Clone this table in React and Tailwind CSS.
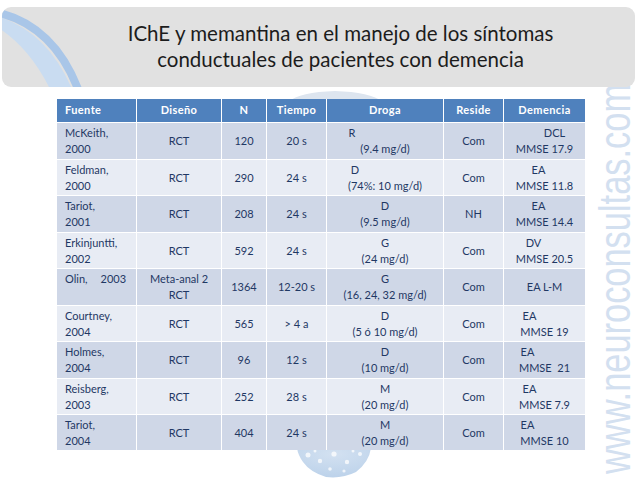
import React from "react";

const rows = [
  {
    f: ["McKeith,", "2000"],
    d: ["RCT"],
    n: "120",
    t: "20 s",
    dr: [["R", "pr-[66px]"], ["(9.4 mg/d)", ""]],
    r: "Com",
    de: [["DCL", "pl-[20px]"], ["MMSE 17.9", ""]],
  },
  {
    f: ["Feldman,", "2000"],
    d: ["RCT"],
    n: "290",
    t: "24 s",
    dr: [["D", "pr-[60px]"], ["(74%: 10 mg/d)", ""]],
    r: "Com",
    de: [["EA", "pr-[12px]"], ["MMSE 11.8", ""]],
  },
  {
    f: ["Tariot,", "2001"],
    d: ["RCT"],
    n: "208",
    t: "24 s",
    dr: [["D", ""], ["(9.5 mg/d)", ""]],
    r: "NH",
    de: [["EA", "pr-[12px]"], ["MMSE 14.4", ""]],
  },
  {
    f: ["Erkinjuntti,", "2002"],
    d: ["RCT"],
    n: "592",
    t: "24 s",
    dr: [["G", ""], ["(24 mg/d)", ""]],
    r: "Com",
    de: [["DV", "pr-[22px]"], ["MMSE 20.5", ""]],
  },
  {
    f: ["olin", "\u00a0"],
    d: ["Meta-anal 2", "RCT"],
    n: "1364",
    t: "12-20 s",
    dr: [["G", ""], ["(16, 24, 32 mg/d)", ""]],
    r: "Com",
    de: [["EA L-M", ""]],
  },
  {
    f: ["Courtney,", "2004"],
    d: ["RCT"],
    n: "565",
    t: "> 4 a",
    dr: [["D", ""], ["(5 ó 10 mg/d)", ""]],
    r: "Com",
    de: [["EA", "pr-[30px]"], ["MMSE 19", ""]],
  },
  {
    f: ["Holmes,", "2004"],
    d: ["RCT"],
    n: "96",
    t: "12 s",
    dr: [["D", ""], ["(10 mg/d)", ""]],
    r: "Com",
    de: [["EA", "pr-[34px]"], ["MMSE  21", ""]],
  },
  {
    f: ["Reisberg,", "2003"],
    d: ["RCT"],
    n: "252",
    t: "28 s",
    dr: [["M", ""], ["(20 mg/d)", ""]],
    r: "Com",
    de: [["EA", "pr-[30px]"], ["MMSE 7.9", ""]],
  },
  {
    f: ["Tariot,", "2004"],
    d: ["RCT"],
    n: "404",
    t: "24 s",
    dr: [["M", ""], ["(20 mg/d)", ""]],
    r: "Com",
    de: [["EA", "pr-[34px]"], ["MMSE 10", ""]],
  },
];

const headers = ["Fuente", "Diseño", "N", "Tiempo", "Droga", "Reside", "Demencia"];

function Cell({ bg, children, left }) {
  return (
    <div
      className={`${bg} flex flex-col justify-center leading-[16px] ${
        left ? "items-start pl-[8px]" : "items-stretch text-center"
      }`}
    >
      {children}
    </div>
  );
}

export default function App() {
  return (
    <div className="relative w-[638px] h-[479px] overflow-hidden bg-white font-['Lato','Open_Sans',sans-serif]">
      {/* globe watermark */}
      <svg
        className="absolute left-0 top-0"
        width="638"
        height="479"
        viewBox="0 0 638 479"
      >
        <defs>
          <radialGradient id="g1" cx="50%" cy="20%" r="80%">
            <stop offset="0%" stopColor="#d3e1f1" />
            <stop offset="100%" stopColor="#bcd2ea" />
          </radialGradient>
        </defs>
        <path d="M288 102 Q300 92 335 91 Q370 92 383 102 Z" fill="#dde5ef" />
        <path d="M297 448 L371 448 Q369 462 356 472 Q342 479 326 477 Q310 472 303 462 Q298 455 297 448 Z" fill="url(#g1)" />
        <g fill="#ffffff" opacity="0.75">
          <circle cx="308" cy="455" r="2.5" />
          <circle cx="320" cy="461" r="2.2" />
          <circle cx="334" cy="454" r="2.6" />
          <circle cx="347" cy="462" r="2.2" />
          <circle cx="360" cy="454" r="2" />
          <circle cx="330" cy="469" r="1.8" />
          <circle cx="344" cy="471" r="1.6" />
          <circle cx="315" cy="451" r="1.5" />
          <circle cx="353" cy="451" r="1.5" />
        </g>
      </svg>

      {/* vertical url watermark */}
      <div className="absolute left-[615px] top-[279px] h-[40px] -translate-x-1/2 -translate-y-1/2 -rotate-90 scale-x-[0.782] whitespace-nowrap font-['Liberation_Sans',sans-serif] text-[44px] leading-[40px] text-[#d3e0f0]">
        www.neuroconsultas.com
      </div>

      <div className="relative pt-[7px] pl-[2px] pr-[3px]">
        {/* title box */}
        <div className="relative h-[80px] overflow-hidden rounded-[9px] bg-[#e1e1e1]">
          <svg className="absolute left-0 top-0" width="120" height="80" viewBox="0 0 120 80">
            <path d="M-2 10 Q46 26 70 82 L48 82 Q28 42 -2 22 Z" fill="#c9dcf1" />
            <path d="M-2 6 Q52 20 76 82" fill="none" stroke="#a9c6e8" strokeWidth="8" />
          </svg>
          <div className="relative flex h-full flex-col items-center justify-center pl-[44px] pb-[2px] text-[20.5px] leading-[26px] text-[#1c1c1c]">
            <div>IChE y memantina en el manejo de los síntomas</div>
            <div>conductuales de pacientes con demencia</div>
          </div>
        </div>

        {/* table */}
        <div className="relative ml-[55px] mt-[12px] grid w-[528px] grid-cols-[79px_84px_44px_59px_116px_59px_81px] grid-rows-[23px_36px_35px_36px_35px_36px_35px_36px_35px_35px] gap-px bg-white text-[11px] text-[#1f3864]">
          {headers.map((h, i) => (
            <div
              key={h}
              className={`flex items-center bg-[#4f81bd] font-bold tracking-[0.4px] text-white ${
                i === 0 ? "justify-start pl-[8px]" : "justify-center"
              }`}
            >
              {h}
            </div>
          ))}
          {rows.map((r, i) => {
            const bg = i % 2 === 0 ? "bg-[#cfd7e7]" : "bg-[#e8ecf4]";
            return (
              <React.Fragment key={i}>
                <Cell bg={bg} left>
                  {r.f[0] === "olin" ? (
                    <div className="flex whitespace-pre">
                      <span>Olin,</span>
                      <span className="ml-[13px]">2003</span>
                    </div>
                  ) : (
                    <div>{r.f[0]}</div>
                  )}
                  <div>{r.f[1]}</div>
                </Cell>
                <Cell bg={bg}>
                  {r.d.map((x) => (
                    <div key={x}>{x}</div>
                  ))}
                </Cell>
                <Cell bg={bg}>
                  <div>{r.n}</div>
                </Cell>
                <Cell bg={bg}>
                  <div>{r.t}</div>
                </Cell>
                <Cell bg={bg}>
                  {r.dr.map(([x, c]) => (
                    <div key={x} className={c}>
                      {x}
                    </div>
                  ))}
                </Cell>
                <Cell bg={bg}>
                  <div>{r.r}</div>
                </Cell>
                <Cell bg={bg}>
                  {r.de.map(([x, c]) => (
                    <div key={x} className={`whitespace-pre ${c}`}>
                      {x}
                    </div>
                  ))}
                </Cell>
              </React.Fragment>
            );
          })}
        </div>
      </div>
    </div>
  );
}
